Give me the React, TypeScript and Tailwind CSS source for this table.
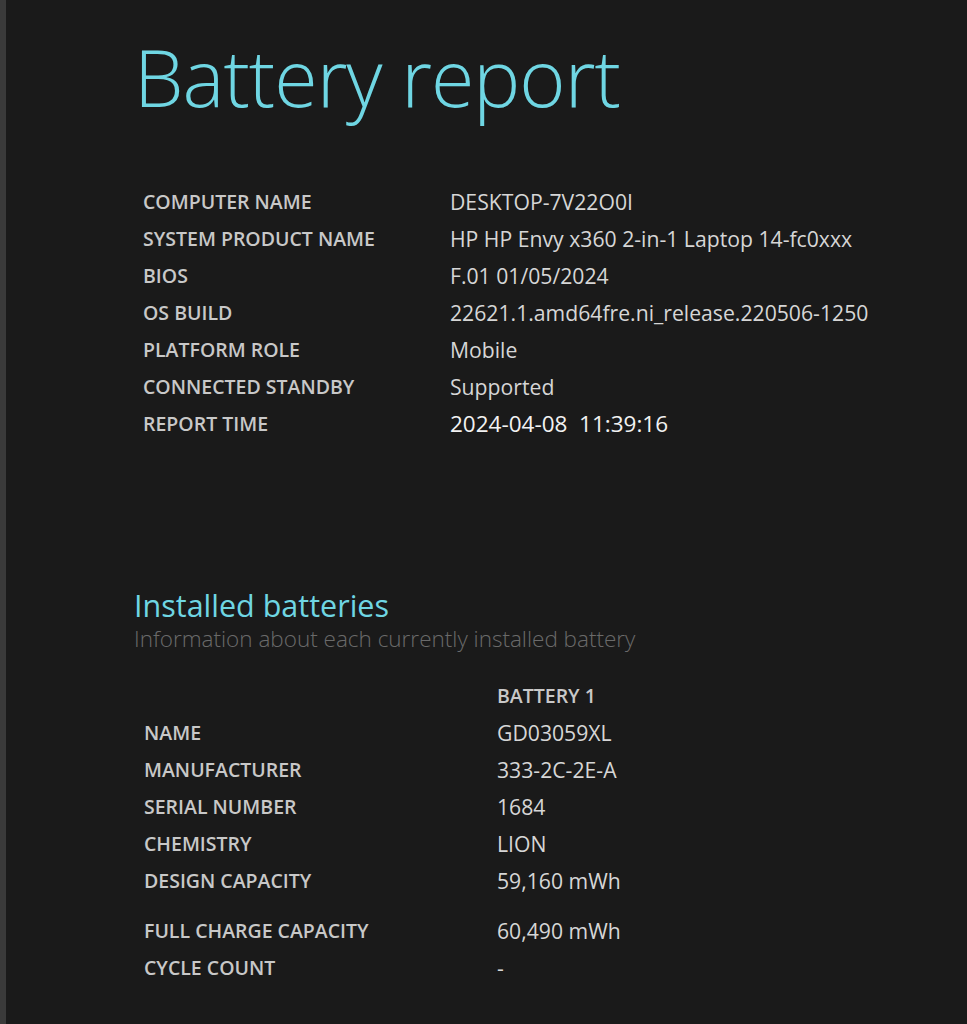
const systemRows: [string, string][] = [
  ["COMPUTER NAME", "DESKTOP-7V22O0I"],
  ["SYSTEM PRODUCT NAME", "HP HP Envy x360 2-in-1 Laptop 14-fc0xxx"],
  ["BIOS", "F.01 01/05/2024"],
  ["OS BUILD", "22621.1.amd64fre.ni_release.220506-1250"],
  ["PLATFORM ROLE", "Mobile"],
  ["CONNECTED STANDBY", "Supported"],
];

const batteryRows: [string, string][] = [
  ["NAME", "GD03059XL"],
  ["MANUFACTURER", "333-2C-2E-A"],
  ["SERIAL NUMBER", "1684"],
  ["CHEMISTRY", "LION"],
  ["DESIGN CAPACITY", "59,160 mWh"],
];

const App = () => {
  return (
    <div
      className="flex min-h-[1024px] w-[967px] bg-[#1a1a1a] text-[#d6d6d6]"
      style={{ fontFamily: '"Open Sans", "Noto Sans", sans-serif' }}
    >
      <div className="w-[6px] bg-[#3a3a3a]" />
      <main className="flex-1 pl-[128px]">
        <h1 className="mt-[27px] text-[79px] font-[360] leading-[100px] text-[#6fd6e3] tracking-[-1px]">
          Battery report
        </h1>

        <table className="mt-[56px] ml-[9px] border-collapse">
          <tbody>
            {systemRows.map(([label, value]) => (
              <tr key={label} className="h-[37px]">
                <td className="w-[307px] text-[19.5px] font-semibold leading-[26px] text-[#c8c8c8]">{label}</td>
                <td className="text-[21.2px] leading-[28px] text-[#d6d6d6]">{value}</td>
              </tr>
            ))}
            <tr className="h-[37px]">
              <td className="text-[19.5px] font-semibold leading-[26px] text-[#c8c8c8]">REPORT TIME</td>
              <td className="text-[22.5px] leading-[28px] text-[#f2f2f2]">2024-04-08&nbsp;&nbsp;11:39:16</td>
            </tr>
          </tbody>
        </table>

        <h2 className="mt-[144px] text-[30.5px] leading-[38px] text-[#6fd6e3]">Installed batteries</h2>
        <p className="text-[22.5px] font-light leading-[30px] text-[#6a6a6a]">
          Information about each currently installed battery
        </p>

        <table className="mt-[23px] ml-[10px] border-collapse">
          <tbody>
            <tr className="h-[37px]">
              <td className="w-[353px]" />
              <td className="text-[19.5px] font-semibold leading-[26px] text-[#c8c8c8]">BATTERY 1</td>
            </tr>
            {batteryRows.map(([label, value]) => (
              <tr key={label} className="h-[37px]">
                <td className="text-[19.5px] font-semibold leading-[26px] text-[#c8c8c8]">{label}</td>
                <td className="text-[21.2px] leading-[28px] text-[#d6d6d6]">{value}</td>
              </tr>
            ))}
            <tr className="h-[13px]" />
            <tr className="h-[37px]">
              <td className="text-[19.5px] font-semibold leading-[26px] text-[#c8c8c8]">FULL CHARGE CAPACITY</td>
              <td className="text-[21.2px] leading-[28px] text-[#d6d6d6]">60,490 mWh</td>
            </tr>
            <tr className="h-[37px]">
              <td className="text-[19.5px] font-semibold leading-[26px] text-[#c8c8c8]">CYCLE COUNT</td>
              <td className="text-[21.2px] leading-[28px] text-[#d6d6d6]">-</td>
            </tr>
          </tbody>
        </table>
      </main>
    </div>
  );
};

export default App;
